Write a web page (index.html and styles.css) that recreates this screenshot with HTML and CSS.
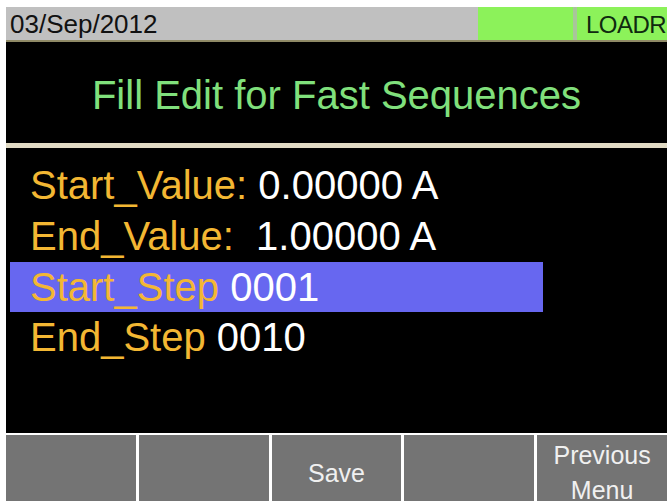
FILE: index.html
```html
<!DOCTYPE html>
<html lang="en">
<head>
  <meta charset="UTF-8">
  <title>Fill Edit for Fast Sequences</title>
  <link rel="stylesheet" href="styles.css">
</head>
<body>
  <div class="screen">
    <!-- status bar -->
    <div class="status">
      <div class="status-date">03/Sep/2012</div>
      <div class="status-led"></div>
      <div class="status-sep"></div>
      <div class="status-mode">LOADR</div>
    </div>

    <div class="title">Fill Edit for Fast Sequences</div>

    <div class="fields">
      <div class="field"><span class="label">Start_Value:</span> <span class="value">0.00000 A</span></div>
      <div class="field"><span class="label">End_Value:</span>&nbsp; <span class="value">1.00000 A</span></div>
      <div class="field selected"><span class="label">Start_Step</span> <span class="value">0001</span></div>
      <div class="field"><span class="label">End_Step</span> <span class="value">0010</span></div>
    </div>

    <div class="softkeys">
      <div class="key"></div>
      <div class="key"></div>
      <div class="key">Save</div>
      <div class="key"></div>
      <div class="key">Previous<br>Menu</div>
    </div>
  </div>
</body>
</html>
```

FILE: styles.css
```css
body {
  margin: 0;
  background: #fff;
  font-family: "Liberation Sans", Arial, sans-serif;
  overflow: hidden;
}
.screen {
  padding: 7px 4px 0 6px;
}
/* Status bar */
.status {
  display: flex;
  height: 33px;
  background: #c0c0c0;
  border-bottom: 2px solid #8f8a66;
  font-size: 26px;
}
.status-date {
  flex: 1;
  padding-left: 4px;
  line-height: 35px;
  color: #111;
}
.status-led {
  width: 95px;
  background: #8cf25a;
}
.status-sep {
  width: 4px;
  background: #a9c59a;
}
.status-mode {
  width: 81px;
  padding-left: 9px;
  background: #8cf25a;
  color: #0f2a0f;
  font-size: 24px;
  letter-spacing: -0.5px;
  line-height: 35px;
  overflow: hidden;
  white-space: nowrap;
}
/* Title */
.title {
  height: 96px;
  padding-top: 5px;
  display: flex;
  align-items: center;
  justify-content: center;
  background: #000;
  color: #80e07c;
  font-size: 40px;
  border-bottom: 5px solid #e1dac4;
}
/* Fields */
.fields {
  height: 273px;
  padding-top: 12px;
  background: #000;
  font-size: 40px;
}
.field {
  line-height: 51px;
  height: 51px;
  padding-left: 24px;
  white-space: nowrap;
}
.field.selected {
  margin-left: 4px;
  width: 513px;
  padding-left: 20px;
  height: 50px;
  line-height: 50px;
  background: #6767f0;
}
.label {
  color: #f3b733;
}
.value {
  color: #fff;
}
/* Soft keys */
.softkeys {
  display: grid;
  grid-template-columns: repeat(5, 1fr);
  gap: 3px;
  border-top: 2px solid #fff;
  background: #fff;
}
.key {
  height: 76px;
  display: flex;
  align-items: center;
  justify-content: center;
  text-align: center;
  background: #747474;
  color: #f0f0f0;
  font-size: 25px;
  line-height: 35px;
}
```
